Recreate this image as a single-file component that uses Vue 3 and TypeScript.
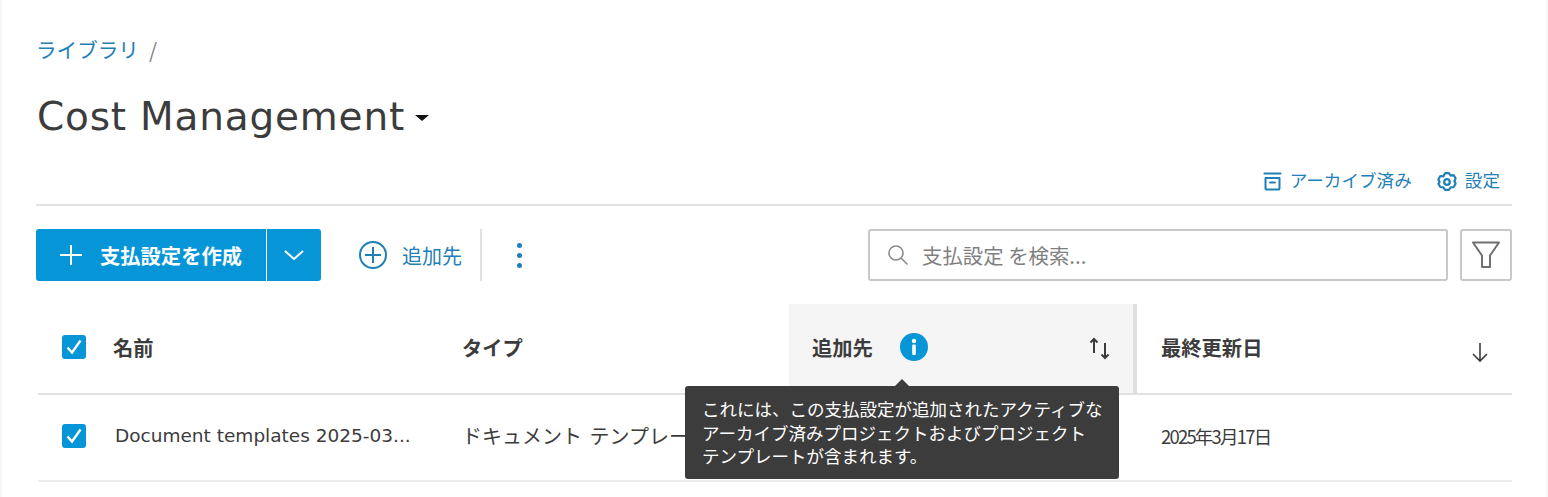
<template>
  <div class="page">
    <nav class="crumbs">
      <a class="crumb-link">ライブラリ</a>
      <span class="crumb-sep">/</span>
    </nav>

    <div class="title-row">
      <h1 class="title">Cost Management</h1>
      <span class="caret"></span>
    </div>

    <div class="top-links">
      <a class="top-link">
        <svg width="19" height="19" viewBox="0 0 19 19" fill="none" stroke="currentColor" stroke-width="2.2" stroke-linecap="round">
          <path d="M1.5 1.5h16" />
          <path d="M2.5 6v10a1.6 1.6 0 0 0 1.6 1.6h10.8a1.6 1.6 0 0 0 1.6-1.6V6z" stroke-width="2" stroke-linejoin="round" />
          <path d="M7 10.5h5" stroke-width="1.8" />
        </svg>
        アーカイブ済み
      </a>
      <a class="top-link">
        <svg width="20" height="20" viewBox="0 0 20 20" fill="none" stroke="currentColor" stroke-width="2.2" stroke-linejoin="round">
          <path d="M8.1 1.2h3.8l1.8 2.4 3-.4 1.9 3.2-1.2 2.6 1.2 2.8-1.9 3.2-3 .4-1.8 2.4H8.1l-1.8-2.4-3-.4-1.9-3.2L2.6 10 1.4 7.2l1.9-3.2 3 .4z" />
          <circle cx="10" cy="10" r="2.8" />
        </svg>
        設定
      </a>
    </div>

    <div class="toolbar">
      <div class="split-btn">
        <button class="btn-main">
          <svg width="24" height="24" viewBox="0 0 24 24" stroke="currentColor" stroke-width="2">
            <path d="M12 2v20M1 12h22" />
          </svg>
          <span>支払設定を作成</span>
        </button>
        <button class="btn-more">
          <svg width="20" height="18" viewBox="0 0 20 18" fill="none" stroke="currentColor" stroke-width="2">
            <path d="M1 5l9 8 9-8" />
          </svg>
        </button>
      </div>

      <a class="add-to">
        <svg width="30" height="30" viewBox="0 0 30 30" fill="none" stroke="currentColor" stroke-width="2">
          <circle cx="15" cy="15" r="13" />
          <path d="M15 7v16M7 15h16" />
        </svg>
        追加先
      </a>
      <span class="tool-sep"></span>
      <button class="kebab">
        <i></i><i></i><i></i>
      </button>

      <div class="search">
        <svg width="22" height="22" viewBox="0 0 22 22" fill="none" stroke="#8a8a8a" stroke-width="1.6">
          <circle cx="9" cy="9" r="7" />
          <path d="M14 14l6.5 6.5" />
        </svg>
        <span>支払設定 を検索...</span>
      </div>
      <button class="filter">
        <svg width="30" height="30" viewBox="0 0 30 30" fill="none" stroke="#6f6f6f" stroke-width="2" stroke-linejoin="round">
          <path d="M2 2.5h26L19 15.5v11.5h-8V15.5z" />
        </svg>
      </button>
    </div>

    <div class="table">
      <div class="row head">
        <div class="cell"><span class="check"><svg width="22" height="22" viewBox="0 0 22 22" fill="none" stroke="#fff" stroke-width="2.4"><path d="M4.5 11.5l4.5 5 8.5-12" /></svg></span></div>
        <div class="cell">名前</div>
        <div class="cell">タイプ</div>
        <div class="cell active">
          追加先
          <svg class="info" width="28" height="28" viewBox="0 0 28 28">
            <circle cx="14" cy="14" r="14" fill="#0696d7" />
            <circle cx="14" cy="8" r="2.2" fill="#fff" />
            <rect x="12.2" y="11.5" width="3.6" height="10.5" rx="1" fill="#fff" />
          </svg>
          <svg class="sort" width="22" height="24" viewBox="0 0 22 24" fill="none" stroke="#3c3c3c" stroke-width="2">
            <path d="M5 16V2M1.5 5.5L5 2l3.5 3.5" />
            <path d="M16 6v15M12.5 17.5L16 21l3.5-3.5" />
          </svg>
        </div>
        <div class="cell">
          最終更新日
          <svg class="sort down" width="20" height="22" viewBox="0 0 20 22" fill="none" stroke="#3c3c3c" stroke-width="1.6">
            <path d="M10 2v18M3 13l7 7 7-7" />
          </svg>
        </div>
      </div>
      <div class="row body">
        <div class="cell"><span class="check"><svg width="22" height="22" viewBox="0 0 22 22" fill="none" stroke="#fff" stroke-width="2.4"><path d="M4.5 11.5l4.5 5 8.5-12" /></svg></span></div>
        <div class="cell name">Document templates 2025-03...</div>
        <div class="cell type">ドキュメント テンプレート</div>
        <div class="cell"></div>
        <div class="cell date">2025年3月17日</div>
      </div>

      <div class="tooltip">
        これには、この支払設定が追加されたアクティブな<br />
        アーカイブ済みプロジェクトおよびプロジェクト<br />
        テンプレートが含まれます。
      </div>
    </div>
  </div>
</template>

<script setup lang="ts">
</script>

<style>
html,
body {
  margin: 0;
  background: #fff;
}
</style>

<style scoped>
.page {
  box-sizing: border-box;
  width: 1548px;
  height: 497px;
  padding: 36px 34px 0 34px;
  border-left: 2px solid #f8f8f8;
  border-right: 2px solid #f8f8f8;
  overflow: hidden;
  font-family: "DejaVu Sans", "Noto Sans CJK JP", sans-serif;
  color: #3c3c3c;
}

.crumbs {
  display: flex;
  gap: 10px;
  height: 26px;
  align-items: center;
  font-size: 20.6px;
  font-family: "Noto Sans CJK JP", sans-serif;
}

.crumb-link {
  color: #1f80b8;
}

.crumb-sep {
  color: #808080;
}

.title-row {
  display: flex;
  align-items: center;
  gap: 10px;
  margin: 29px 0 0 1px;
  height: 52px;
}

.title {
  margin: 0;
  font-size: 39px;
  font-weight: 400;
  line-height: 52px;
  color: #3c3c3c;
  letter-spacing: 0.8px;
}

.caret {
  width: 0;
  height: 0;
  margin-top: 2px;
  border-left: 7px solid transparent;
  border-right: 7px solid transparent;
  border-top: 6px solid #111;
}

.top-links {
  display: flex;
  justify-content: flex-end;
  gap: 25px;
  height: 63px;
  padding: 25px 12px 0 0;
  box-sizing: border-box;
  border-bottom: 2px solid #e2e2e2;
}

.top-link {
  display: flex;
  align-items: flex-start;
  gap: 8px;
  color: #1f80b8;
  font-size: 17.6px;
  line-height: 24px;
  font-family: "Noto Sans CJK JP", sans-serif;
}

.top-link svg {
  margin-top: 4px;
}

.toolbar {
  display: flex;
  align-items: center;
  margin-top: 23px;
  height: 52px;
}

.split-btn {
  display: flex;
  gap: 1px;
  height: 52px;
}

.btn-main,
.btn-more {
  border: none;
  background: #0696d7;
  color: #fff;
  display: flex;
  align-items: center;
  padding: 0;
  cursor: pointer;
}

.btn-main {
  width: 230px;
  gap: 17px;
  padding-left: 23px;
  border-radius: 3px 0 0 3px;
  font-family: "Noto Sans CJK JP", sans-serif;
  font-size: 20.3px;
  font-weight: 700;
}

.btn-more {
  width: 54px;
  justify-content: center;
  border-radius: 0 3px 3px 0;
}

.add-to {
  display: flex;
  align-items: center;
  gap: 14px;
  margin-left: 37px;
  color: #1f80b8;
  font-size: 20px;
  font-family: "Noto Sans CJK JP", sans-serif;
}

.tool-sep {
  width: 2px;
  height: 52px;
  margin-left: 18px;
  background: #e2e2e2;
}

.kebab {
  display: flex;
  flex-direction: column;
  gap: 5px;
  align-items: center;
  margin-left: 29px;
  padding: 0;
  width: 16px;
  border: none;
  background: none;
}

.kebab i {
  width: 5px;
  height: 5px;
  border-radius: 50%;
  background: #1f80b8;
}

.search {
  box-sizing: border-box;
  display: flex;
  align-items: center;
  gap: 13px;
  width: 580px;
  height: 52px;
  margin-left: auto;
  padding-left: 17px;
  border: 2px solid #c8c8c8;
  border-radius: 3px;
  color: #808080;
  font-size: 20.4px;
  font-family: "Noto Sans CJK JP", sans-serif;
}

.filter {
  box-sizing: border-box;
  display: flex;
  align-items: center;
  justify-content: center;
  width: 52px;
  height: 52px;
  margin-left: 12px;
  padding: 0;
  background: #fff;
  border: 2px solid #c8c8c8;
  border-radius: 3px;
}

.table {
  position: relative;
  margin-top: 23px;
  margin-left: 2px;
  width: 1474px;
}

.row {
  display: grid;
  grid-template-columns: 75px 349px 327px 348px 375px;
}

.head {
  height: 91px;
  border-bottom: 2px solid #e2e2e2;
  box-sizing: border-box;
  font-family: "Noto Sans CJK JP", sans-serif;
  font-size: 20.3px;
  font-weight: 700;
}

.head .cell {
  padding-bottom: 3px;
}

.body {
  height: 87px;
  border-bottom: 2px solid #ececec;
  box-sizing: border-box;
  font-size: 18px;
}

.body .cell {
  padding-bottom: 4px;
}

.cell {
  position: relative;
  display: flex;
  align-items: center;
  min-width: 0;
}

.head .cell:nth-child(4) {
  padding-left: 23px;
}

.head .cell:nth-child(5) {
  padding-left: 24px;
}

.active {
  background: #f5f5f5;
  border-right: 4px solid #e0e0e0;
}

.check {
  display: flex;
  align-items: center;
  justify-content: center;
  width: 24px;
  height: 24px;
  margin-left: 24px;
  background: #0696d7;
  border-radius: 3px;
}

.info {
  margin-left: 27px;
}

.sort {
  position: absolute;
  right: 22px;
  top: 33px;
}

.sort.down {
  right: 22px;
  top: 37px;
}

.name {
  padding-left: 2px;
  font-family: "DejaVu Sans", sans-serif;
  font-size: 18.5px;
  white-space: nowrap;
}

.type {
  font-family: "Noto Sans CJK JP", sans-serif;
  font-size: 20px;
  word-spacing: 3px;
  white-space: nowrap;
}

.date {
  padding-left: 24px;
  font-family: "Noto Sans CJK JP", sans-serif;
  font-size: 18.5px;
  letter-spacing: -1.8px;
}

.tooltip {
  position: absolute;
  left: 647px;
  top: 82px;
  box-sizing: border-box;
  width: 434px;
  height: 93px;
  padding: 11px 0 0 17px;
  background: #3c3c3c;
  border-radius: 3px;
  color: #fff;
  font-family: "Noto Sans CJK JP", sans-serif;
  font-size: 17.5px;
  line-height: 23.5px;
  white-space: nowrap;
}

.tooltip::before {
  content: "";
  position: absolute;
  left: 210px;
  top: -7px;
  border-left: 7px solid transparent;
  border-right: 7px solid transparent;
  border-bottom: 7px solid #3c3c3c;
}
</style>
